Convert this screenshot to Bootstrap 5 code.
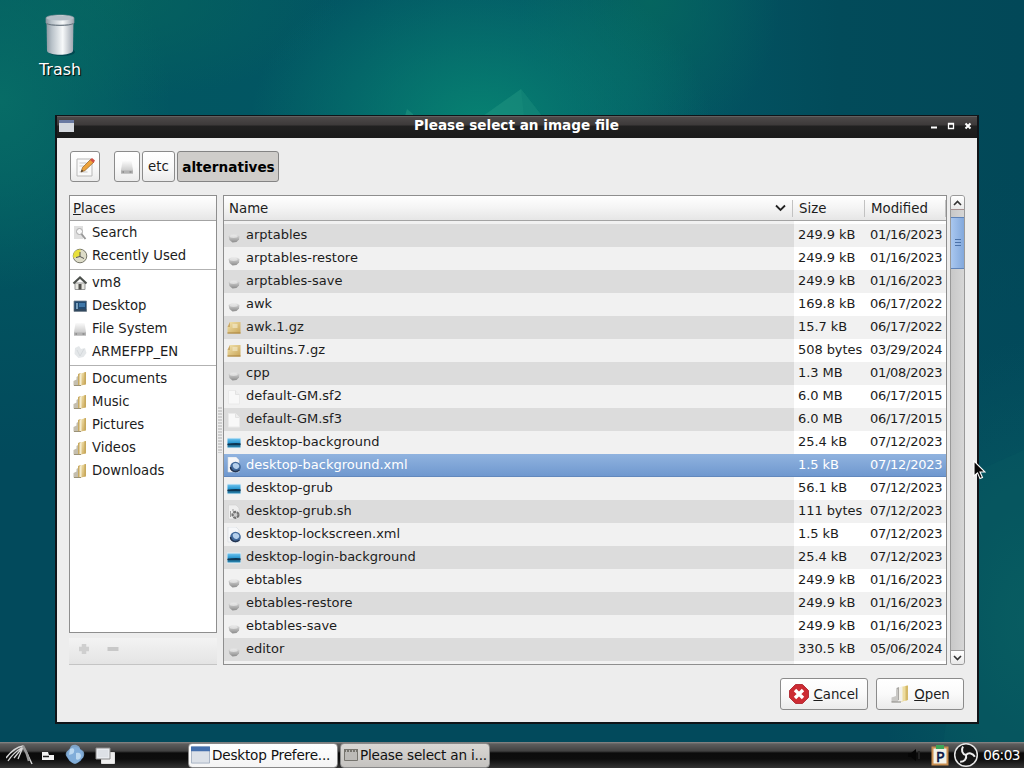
<!DOCTYPE html>
<html lang="en">
<head>
    <title>Please select an image file</title>
    <meta charset="utf-8">
    <meta name="viewport" content="width=device-width, initial-scale=1">
    <link href="https://cdn.jsdelivr.net/npm/bootstrap@5.3.0/dist/css/bootstrap.min.css" rel="stylesheet">
    <script src="https://cdn.jsdelivr.net/npm/bootstrap@5.3.0/dist/js/bootstrap.bundle.min.js"></script>
    <style>
        body {
            width: 1024px;
            height: 768px;
            font-family: "DejaVu Sans", sans-serif;
            font-size: 13px;
            line-height: 23px;
            color: #1c1c1c;
            background:
                radial-gradient(ellipse 170px 190px at 0 100px, #076c66 0%, #076c6600 100%),
                radial-gradient(ellipse 230px 170px at 480px 125px, #078272 0%, #07827200 100%),
                radial-gradient(ellipse 130px 150px at 650px 0, #05655f 0%, #05655f00 100%),
                radial-gradient(ellipse 230px 100px at 110px 0, #05625f 0%, #05625f00 100%),
                radial-gradient(ellipse 150px 280px at 1024px 620px, #085b61 0%, #085b6100 100%),
                linear-gradient(180deg, #024a5c00 22%, #024a5c 60%),
                linear-gradient(90deg, #025861 0%, #025563 35%, #035866 62%, #024b5a 82%, #024858 100%);
        }
        svg { display: block; flex-shrink: 0; }
        .wall { left: 0; top: 0; }
        .trash { left: 20px; top: 11px; width: 80px; }
        .trash-label { font-size: 15.9px; color: #fff; text-shadow: 1px 1px 1px #000; line-height: 22px; margin-top: 2px; }

        .window { left: 55px; top: 115px; width: 924px; height: 609px; background: #ededed; border: 2px solid #101418; border-top-width: 1px; }
        .titlebar { height: 22px; background: linear-gradient(#777 0, #4d4949 1px, #3d3a3a 9px, #212121 10px, #1b1b1b 100%); color: #fff; font-weight: bold; line-height: 19px; padding: 0 4px 0 2px; }
        .titlebar .caption { font-size: 13.6px; padding-left: 30px; }
        .win-body { padding: 13px 12px 0; }

        .gtk-btn { border: 1px solid #8b8b8b; border-radius: 3px; background: linear-gradient(#fff, #fafafa 50%, #ebebeb); color: #1c1c1c; padding: 0; font-size: 13.33px; height: 31px; line-height: 29px; }
        .gtk-btn.pressed { background: #cfcdca; color: #000; font-weight: bold; font-size: 13.6px; border-color: #848484; padding: 1px 0 0 1px; }
        .pathbar { margin: 0 0 13px 1px; }
        .path-parts { gap: 2px; }
        .action-btn { height: 32px; width: 88px; }
        .w-edit { width: 30px; margin-right: 14px; }
        .w-drive { width: 26px; }
        .w-etc { width: 33px; }
        .w-alt { width: 102px; }

        .side { width: 148px; font-size: 13.2px; }
        .places { height: 438px; border: 1px solid #8e8e8e; background: #fff; }
        .head-row { height: 25px; line-height: 25px; font-size: 13.33px; background: linear-gradient(#fff, #f4f4f4 50%, #e6e6e6); border-bottom: 1px solid #a3a3a3; }
        .places .head-row { padding-left: 3px; }
        .place { height: 23px; padding-left: 2px; gap: 4px; }
        .place-sep { height: 4px; padding-top: 1px; }
        .place-sep div { height: 1px; margin-top: 1px; background: #b2b2b2; }
        .side-tools { height: 27px; margin-top: 5px; background: linear-gradient(#f3f3f3, #e4e4e4); border-bottom: 1px solid #c4c4c4; padding: 0 0 4px 8px; }
        .splitter { width: 6px; height: 470px; }
        .grip { width: 4px; height: 46px; background-image: radial-gradient(circle at 1px 1px, #c4c4c4 .6px, transparent 1px); background-size: 2px 3px; }

        .files { width: 724px; height: 470px; border: 1px solid #8e8e8e; background: #f1f1f1; overflow: hidden; }
        .c-name { width: 570px; }
        .c-size { width: 72px; padding-left: 4px; white-space: nowrap; }
        .c-date { width: 80px; padding-left: 4px; white-space: nowrap; }
        .file .c-size { letter-spacing: -.07px; }
        .file .c-date { letter-spacing: -.27px; }
        .head-row .c-name { padding: 0 6px 0 5px; width: 568px; }
        .head-row .c-size, .head-row .c-date { padding-left: 6px; border-left: 1px solid #c2c2c2; margin: 4px 0 3px; line-height: 17px; }
        .head-row .c-date { width: 82px; border-right: 1px solid #c2c2c2; }
        .tail-gap { height: 3px; background: linear-gradient(90deg, #f1f1f1 570px, #fff 570px); }
        .file { height: 23px; line-height: 22px; }
        .file .c-name { background: #f1f1f1; padding-left: 2px; gap: 4px; }
        .file .c-name span { padding-bottom: 1px; }
        .file .c-size, .file .c-date { background: #fff; }
        .file.odd .c-name { background: #dcdcdc; }
        .file.odd .c-size, .file.odd .c-date { background: #f1f1f1; }
        .file.picked { background: linear-gradient(#90b3df, #6f98cf); border-bottom: 1px solid #6288bd; color: #fff; }
        .file.picked > div { background: none; }

        .scroll { width: 15px; height: 470px; margin-left: 3px; border: 1px solid #999; border-radius: 3px; background: linear-gradient(90deg, #c8c8c8, #d6d6d6); overflow: hidden; }
        .scroll-btn { height: 14px; background: linear-gradient(#fff, #e9e9e9); }
        .scroll-btn.up { border-bottom: 1px solid #a59090; }
        .scroll-btn.down { border-top: 1px solid #999; }
        .thumb { height: 52px; margin-top: 7px; border: solid #5f83b8; border-width: 1px 0; background: linear-gradient(90deg, #a9c7ef, #82a8dc); }
        .actions { padding: 13px 1px 0 0; }

        .taskbar { height: 26px; background: linear-gradient(#8b8b8b 0, #5d5d5d 2px, #414141 9px, #0b0b0b 11px, #0d0d0d 17px, #333 100%); color: #fff; }
        .launchers { width: 188px; padding-left: 6px; }
        .task { width: 150px; height: 25px; border: 1px solid #888; border-radius: 4px; font-size: 13.6px; line-height: 22px; color: #111; background: linear-gradient(#fff, #f4f4f4); padding-left: 2px; gap: 2px; letter-spacing: -.2px; white-space: nowrap; overflow: hidden; }
        .task.current { background: linear-gradient(#d9d7d4, #c5c3c0); margin-left: 2px; padding-left: 3px; }
        .clock { font-size: 13.6px; line-height: 24px; letter-spacing: -.5px; }
        .pointer { left: 973px; top: 460px; }
    </style>
</head>
<body class="position-relative overflow-hidden">

<!-- icon set -->
<svg width="0" height="0" class="position-absolute">
    <defs>
        <linearGradient id="gold" x2="1" y2="1"><stop stop-color="#f2e3ae"/><stop offset="1" stop-color="#c9a557"/></linearGradient>
        <linearGradient id="ball" x2="0" y2="1"><stop stop-color="#e2e2e2"/><stop offset=".5" stop-color="#b5b5b5"/><stop offset="1" stop-color="#8c8c8c"/></linearGradient>
        <linearGradient id="disk" x2="0" y2="1"><stop stop-color="#fafafa"/><stop offset="1" stop-color="#bdbdbd"/></linearGradient>
        <linearGradient id="sea" x2="0" y2="1"><stop stop-color="#6fc3ee"/><stop offset=".45" stop-color="#2d9ad3"/><stop offset=".6" stop-color="#124a6c"/><stop offset="1" stop-color="#2b8fbd"/></linearGradient>
        <linearGradient id="can" x2="1" y2="0"><stop stop-color="#8d99a3"/><stop offset=".2" stop-color="#b9c2c9"/><stop offset=".6" stop-color="#f7f9fa"/><stop offset="1" stop-color="#9ca4ae"/></linearGradient>
    </defs>
    <symbol id="i-exec" viewBox="0 0 16 16"><path d="M2.500 8 5 6.500h6L13.500 8l-.5 3.500-2.500 2.500-4 .5L3.500 12z" fill="url(#ball)"/><ellipse cx="7.600" cy="8.300" rx="4" ry="1.600" fill="#eee" opacity=".6"/></symbol>
    <symbol id="i-gz" viewBox="0 0 16 16"><path d="M4 2h10.500v11.500H1.500V7z" fill="url(#gold)"/><path d="M1.500 7 4 2v5z" fill="#c9a868"/><path d="M1.500 13h13" stroke="#a8823f"/><path d="M6.500 4h5v4h-5z" fill="#f5edcf" opacity=".6"/></symbol>
    <symbol id="i-doc" viewBox="0 0 16 16"><path d="M2.500 1.500h7l4 4v9.500h-11z" fill="#f8f8f8" stroke="#eaeaea"/><path d="M9.500 1.500v4h4" fill="#eee" stroke="#e2e2e2"/></symbol>
    <symbol id="i-img" viewBox="0 0 16 16"><path d="M1 2.500h14v11H1z" fill="#e4eef4"/><path d="M1.500 3.500h13v9h-13z" fill="url(#sea)"/><path d="M1.500 9c3 0 7-2 13-.5v1.500h-13z" fill="#0d3552"/></symbol>
    <symbol id="i-xml" viewBox="0 0 16 16"><path d="M2 0h8l3 3v12H2z" fill="#f6f7f9" stroke="#d5d9de" stroke-width=".6"/><circle cx="9.500" cy="10" r="5.300" fill="#41699b"/><path d="M7 7c2-2 5-1 6 1s-1 4-3 4-4-3-3-5z" fill="#b5d0ec"/><path d="M4.500 10c0 4 5 6 9 3" stroke="#26354f" fill="none" stroke-width="1.400"/></symbol>
    <symbol id="i-sh" viewBox="0 0 16 16"><path d="M2.500 1h7.500l3 3v11H2.500z" fill="#efefef" stroke="#d0d0d0" stroke-width=".6"/><circle cx="9.500" cy="10.800" r="3" fill="#ccc" stroke="#737373" stroke-width="2.200" stroke-dasharray="3 .8"/><path d="M4.500 7v6M7 5v2" stroke="#999"/></symbol>
    <symbol id="i-find" viewBox="0 0 16 16"><path d="M2 1h9v13H2z" fill="#dfdfdf"/><circle cx="7.500" cy="6.500" r="3" fill="#f8f8f8" stroke="#aaa"/><path d="m9.500 9 4 5" stroke="#999" stroke-width="2"/></symbol>
    <symbol id="i-recent" viewBox="0 0 16 16"><circle cx="8" cy="8" r="6.800" fill="#dddcc8" stroke="#77776a"/><path d="M8 8 1.500 10A6.600 6.600 0 0 1 8.500 1.500z" fill="#e8e03c"/><path d="M8 4v4.500l4 2M4 9.500l4-1" stroke="#555" fill="none"/></symbol>
    <symbol id="i-home" viewBox="0 0 16 16"><path d="M3 8h10v6.500H3z" fill="#e6e6e0" stroke="#999"/><path d="M6.500 9h3v5.500h-3z" fill="#4f4f4b"/><path d="m1.500 8.500 6.500-6 6.500 6" fill="none" stroke="#4c504c" stroke-width="2.200"/></symbol>
    <symbol id="i-desk" viewBox="0 0 16 16"><path d="M2 3h12.500v10.500H2z" fill="#21496f" stroke="#78848e" stroke-width=".8"/><path d="M4 5h2v6H4z" fill="#7aa0bd"/><path d="M7 5h6v4H7z" fill="#3f77a8"/><path d="M2 12h12.500" stroke="#404850"/></symbol>
    <symbol id="i-disk" viewBox="0 0 16 16"><path d="M3.500 2h9l1.500 9v3.500H2V11z" fill="url(#disk)"/><path d="M2 11.500h12v3H2z" fill="#b3b3b3"/><path d="M3.500 13h1.500M10.500 13h2" stroke="#777"/></symbol>
    <symbol id="i-vol" viewBox="0 0 16 16"><path d="M3 4 7 2l2 3 4-1 1.500 5-3 4-5 1-4-4z" fill="#e4e7e9"/><path d="m5 6 3 6 4-7" fill="none" stroke="#d5d9dc"/></symbol>
    <symbol id="i-folder" viewBox="0 0 16 16"><path d="M9 2.500 13.500 1v12.500L9 14.500z" fill="url(#gold)"/><path d="M12.500 1.200 14 1v12.300l-1.500.4z" fill="#c8a95c"/><path d="M6 3 8.500 2v12L6 14.500z" fill="#c9ab62"/><path d="M7.500 3.500 9.500 2.500V14l-2 .5z" fill="#f4ecd0"/><path d="M1.500 10 4.500 8.500V6L6 5v9l-4.500.5z" fill="#c4beae"/><path d="M2 14.500h7" stroke="#9c9276"/></symbol>
    <!-- half-open folder on the Open button -->
    <symbol id="i-open" viewBox="0 0 20 20"><path d="m11 3 6.500-1.500V16L11 18z" fill="#eddc9f"/><path d="m15.500 2 2.500-.5V16l-2.500.8z" fill="#d5b968"/><path d="m9 3.500 3.500-1V17L9 18z" fill="#f3f1ea"/><path d="M6.500 4 9 3v13l-2.500 1z" fill="#a9a7a3"/><path d="M1.500 13.500 6 12V6l2-1v12.500l-6.500.5z" fill="#c9c8c5"/><path d="M1.500 18H11" stroke="#85837e"/></symbol>
    <symbol id="i-win" viewBox="0 0 20 18"><path d="M.5.5h19v17H.5z" fill="#dce1e8" stroke="#a8b3c4"/><path d="M0 0h20v5H0z" fill="#4570ad"/></symbol>
</svg>

<!-- wallpaper facets -->
<svg class="wall position-absolute" width="1024" height="768">
    <path d="M483 116 521 89l21 27z" fill="#219581" opacity=".5"/>
    <path d="m521 89 3 27h18z" fill="#0d7f73" opacity=".6"/>
    <path d="m405 116 2-7 6 5v2z" fill="#219581" opacity=".6"/>
    <path d="m979 470 45-20v318H940z" fill="#0a6263" opacity=".18"/>
</svg>

<div class="trash position-absolute d-flex flex-column align-items-center">
    <svg width="32" height="46" viewBox="0 0 32 46">
        <ellipse cx="18" cy="41" rx="13" ry="4" fill="#013c48" opacity=".7"/>
        <path d="M2.500 9h27l-.5 31c-2 5-24 5-26 0z" fill="url(#can)"/>
        <path d="M2 7c0-4 28-4 28 0v5c-3 3-25 3-28 0z" fill="url(#can)" stroke="#8b959f" stroke-width=".7"/>
        <ellipse cx="16" cy="7" rx="13.500" ry="2.600" fill="#b4bec6"/>
        <path d="M2.500 12.500c3 2.500 24 2.500 27 0" fill="none" stroke="#69757f"/>
    </svg>
    <div class="trash-label">Trash</div>
</div>

<div class="window position-absolute">
    <div class="titlebar d-flex align-items-start">
        <svg class="mt-1" width="15" height="12" viewBox="0 0 15 12"><path d="M0 0h15v12H0z" fill="#d5d9df"/><path d="M0 0h15v3H0z" fill="#6a7aa2"/></svg>
        <div class="caption flex-grow-1 text-center">Please select an image file</div>
        <svg class="mt-1" width="44" height="12" viewBox="0 0 44 12" fill="none" stroke="#fff">
            <path d="M2 7.500h6" stroke-width="2"/>
            <path d="M19.500 3.500h5v5h-5zM19 4h6" stroke-width="1.300"/>
            <path d="m36.500 3.500 5 5m0-5-5 5" stroke-width="2"/>
        </svg>
    </div>

    <div class="win-body">
        <div class="pathbar d-flex">
            <button class="gtk-btn w-edit d-flex align-items-center justify-content-center">
                <svg width="22" height="22" viewBox="0 0 22 22"><path d="M3 3h15v17H3z" fill="#fafafa" stroke="#b9b9b9"/><path d="M5.500 7h7M5.500 10h5M5.500 16h8" stroke="#c9c9c9"/><path d="m7 16 1.500-4.500L17 3l3 3-9 8.500z" fill="#eda33c" stroke="#8f6026" stroke-width=".7"/><path d="m16 4 2-2 3 2.500L19.500 7z" fill="#cf5147"/><path d="m7 16 .8-2.300 1.500 1.400z" fill="#333"/></svg>
            </button>
            <div class="path-parts d-flex">
                <button class="gtk-btn w-drive d-flex align-items-center justify-content-center">
                    <svg width="16" height="16"><use href="#i-disk"/></svg>
                </button>
                <button class="gtk-btn w-etc">etc</button>
                <button class="gtk-btn w-alt pressed">alternatives</button>
            </div>
        </div>

        <div class="d-flex">
            <div class="side">
                <div class="places">
                    <div class="head-row"><u>P</u>laces</div>
                    <div id="places"></div>
                </div>
                <div class="side-tools d-flex align-items-center">
                    <svg width="14" height="14" viewBox="0 0 14 14"><path d="M7 2v10M2 7h10" stroke="#cfcfcf" stroke-width="4.500"/></svg>
                    <svg class="ms-3" width="12" height="14" viewBox="0 0 12 14"><path d="M.5 7h11" stroke="#c8c8c8" stroke-width="4"/></svg>
                </div>
            </div>
            <div class="splitter d-flex align-items-center justify-content-center"><div class="grip"></div></div>
            <div class="files">
                <div class="head-row d-flex">
                    <div class="c-name d-flex justify-content-between align-items-center">Name
                        <svg width="11" height="8" viewBox="0 0 11 8"><path d="m1 1.500 4.500 4.500L10 1.500" fill="none" stroke="#222" stroke-width="1.800"/></svg>
                    </div>
                    <div class="c-size">Size</div>
                    <div class="c-date">Modified</div>
                </div>
                <div class="tail-gap"></div>
                <div id="files"></div>
                <div class="tail-gap"></div>
            </div>
            <div class="scroll d-flex flex-column">
                <div class="scroll-btn up d-flex align-items-center justify-content-center">
                    <svg width="9" height="6" viewBox="0 0 9 6"><path d="M1 5l3.500-3.500L8 5" fill="none" stroke="#333" stroke-width="1.600"/></svg>
                </div>
                <div class="thumb d-flex align-items-center justify-content-center">
                    <svg width="6" height="8" viewBox="0 0 6 8"><path d="M0 .5h6M0 3.500h6M0 6.500h6" stroke="#4c72a8"/></svg>
                </div>
                <div class="scroll-btn down mt-auto d-flex align-items-center justify-content-center">
                    <svg width="9" height="6" viewBox="0 0 9 6"><path d="M1 1l3.500 3.500L8 1" fill="none" stroke="#333" stroke-width="1.600"/></svg>
                </div>
            </div>
        </div>

        <div class="actions d-flex justify-content-end gap-2">
            <button class="gtk-btn action-btn d-flex align-items-center justify-content-center">
                <svg class="me-1" width="20" height="20" viewBox="0 0 20 20"><path d="M6.500.5h7l6 6v7l-6 6h-7l-6-6v-7z" fill="#cc2b33" stroke="#b4323a" stroke-linejoin="round"/><path d="m6 6 8 8m0-8-8 8" stroke="#fff" stroke-width="3.400"/></svg>
                <span><u>C</u>ancel</span>
            </button>
            <button class="gtk-btn action-btn d-flex align-items-center justify-content-center">
                <svg class="me-1" width="20" height="20"><use href="#i-open"/></svg>
                <span><u>O</u>pen</span>
            </button>
        </div>
    </div>
</div>

<div class="taskbar position-absolute bottom-0 start-0 w-100 d-flex align-items-center">
    <div class="launchers d-flex align-items-center">
        <svg width="28" height="24" viewBox="0 0 28 24" fill="none" stroke="#d8d8d8"><path d="M0 15C6 7 11 4 17 3c3 5 6 11 9 18" stroke-width="1.400"/><path d="M2 18C7 10 12 7 17 4L8 15M17 4l-5 12" stroke-width="1.300"/><path d="M17 3c3 5 5 10 6 15" stroke="#999" stroke-width="2.500"/></svg>
        <svg class="ms-2" width="13" height="14" viewBox="0 0 13 14"><path d="M0 4h6l1 3h5v5H0z" fill="#f3f3f3"/><path d="M1 8.500h6" stroke="#222" stroke-width="1.500"/></svg>
        <svg class="ms-2" width="24" height="24" viewBox="0 0 24 24"><circle cx="12" cy="12" r="8" fill="#6796c9"/><path d="M8 3c4-3 10 0 9 4 5 0 5 5 3 8-3 1-4 5-8 6-4-1-5-4-7-6-4-3-2-7 1-8z" fill="#86b1dc" opacity=".85"/><path d="M7 6c3-2 5 0 4 3s-4 2-5 3M13 10c3-1 5 0 5 3s-4 5-5 3zM14 4l3 4" fill="#bcd8f0"/></svg>
        <svg class="ms-2" width="21" height="19" viewBox="0 0 21 19"><path d="M6.500 6.500h13v11h-13z" fill="#eee" stroke="#ddd"/><path d="M1 2h14v11H1z" fill="#e8ebef" stroke="#8a8a8a"/><path d="M3 4h10v7H3z" fill="#dde1e6"/></svg>
    </div>
    <div class="task d-flex align-items-center">
        <svg width="19" height="18"><use href="#i-win"/></svg>
        <span>Desktop Prefere...</span>
    </div>
    <div class="task current d-flex align-items-center">
        <svg width="14" height="14" viewBox="0 0 14 14"><path d="M.5 1.500h13v11H.5z" fill="#bcbab7" stroke="#77756f"/><path d="M0 2.500h14" stroke="#77756f" stroke-width="3" stroke-dasharray="2 1"/></svg>
        <span>Please select an i...</span>
    </div>
    <div class="tray d-flex align-items-center ms-auto pe-1">
        <svg width="16" height="16" viewBox="0 0 16 16"><path d="M1 6h3l5-4v12l-5-4H1z" fill="#060606"/><path d="M12 4v8" stroke="#222" stroke-width="2"/></svg>
        <svg class="ms-2" width="18" height="22" viewBox="0 0 18 22"><path d="M1.500 3.500h15v17h-15z" fill="#f3f1e8" stroke="#c98f51" stroke-width="2"/><path d="M5 1h8v4H5z" fill="#3da55a"/><text x="5" y="17.500" font-size="14" fill="#0a1445" stroke="#0a1445" stroke-width=".5">P</text></svg>
        <svg class="ms-1" width="26" height="26" viewBox="0 0 26 26"><circle cx="13" cy="13" r="11.300" fill="#151515" stroke="#e6e6e6" stroke-width="1.500"/><g fill="none" stroke="#eee" stroke-width="2"><path id="blade" d="M13 13c-4-1-5-5-3-8.500"/><use href="#blade" transform="rotate(120 13 13)"/><use href="#blade" transform="rotate(240 13 13)"/></g></svg>
        <span class="clock ms-1">06:03</span>
    </div>
</div>

<svg class="pointer position-absolute" width="13" height="20" viewBox="0 0 13 20"><path d="M1 1v15l3.500-3.200L7 18.500l2.500-1L7 12h5z" fill="#0a0a0a" stroke="#fff" stroke-width="1.100"/></svg>
</body>
<script>
    // null draws a separator
    const places = [
        ['find', 'Search'], ['recent', 'Recently Used'], null,
        ['home', 'vm8'], ['desk', 'Desktop'], ['disk', 'File System'], ['vol', 'ARMEFPP_EN'], null,
        ['folder', 'Documents'], ['folder', 'Music'], ['folder', 'Pictures'], ['folder', 'Videos'], ['folder', 'Downloads']
    ];

    const files = [
        ['exec', 'arptables', '249.9 kB', '01/16/2023'],
        ['exec', 'arptables-restore', '249.9 kB', '01/16/2023'],
        ['exec', 'arptables-save', '249.9 kB', '01/16/2023'],
        ['exec', 'awk', '169.8 kB', '06/17/2022'],
        ['gz', 'awk.1.gz', '15.7 kB', '06/17/2022'],
        ['gz', 'builtins.7.gz', '508 bytes', '03/29/2024'],
        ['exec', 'cpp', '1.3 MB', '01/08/2023'],
        ['doc', 'default-GM.sf2', '6.0 MB', '06/17/2015'],
        ['doc', 'default-GM.sf3', '6.0 MB', '06/17/2015'],
        ['img', 'desktop-background', '25.4 kB', '07/12/2023'],
        ['xml', 'desktop-background.xml', '1.5 kB', '07/12/2023'],
        ['img', 'desktop-grub', '56.1 kB', '07/12/2023'],
        ['sh', 'desktop-grub.sh', '111 bytes', '07/12/2023'],
        ['xml', 'desktop-lockscreen.xml', '1.5 kB', '07/12/2023'],
        ['img', 'desktop-login-background', '25.4 kB', '07/12/2023'],
        ['exec', 'ebtables', '249.9 kB', '01/16/2023'],
        ['exec', 'ebtables-restore', '249.9 kB', '01/16/2023'],
        ['exec', 'ebtables-save', '249.9 kB', '01/16/2023'],
        ['exec', 'editor', '330.5 kB', '05/06/2024']
    ];
    const selected = 10;

    function icon(name) {
        return `<svg width="16" height="16"><use href="#i-${name}"/></svg>`;
    }

    document.getElementById('places').innerHTML = places.map(p => p
        ? `<div class="place d-flex align-items-center">${icon(p[0])}<span>${p[1]}</span></div>`
        : '<div class="place-sep"><div></div></div>').join('');

    document.getElementById('files').innerHTML = files.map((f, i) => `
        <div class="file d-flex ${i === selected ? 'picked' : i % 2 === 0 ? 'odd' : ''}">
            <div class="c-name d-flex align-items-center">${icon(f[0])}<span>${f[1]}</span></div>
            <div class="c-size">${f[2]}</div>
            <div class="c-date">${f[3]}</div>
        </div>`).join('');
</script>
</html>
